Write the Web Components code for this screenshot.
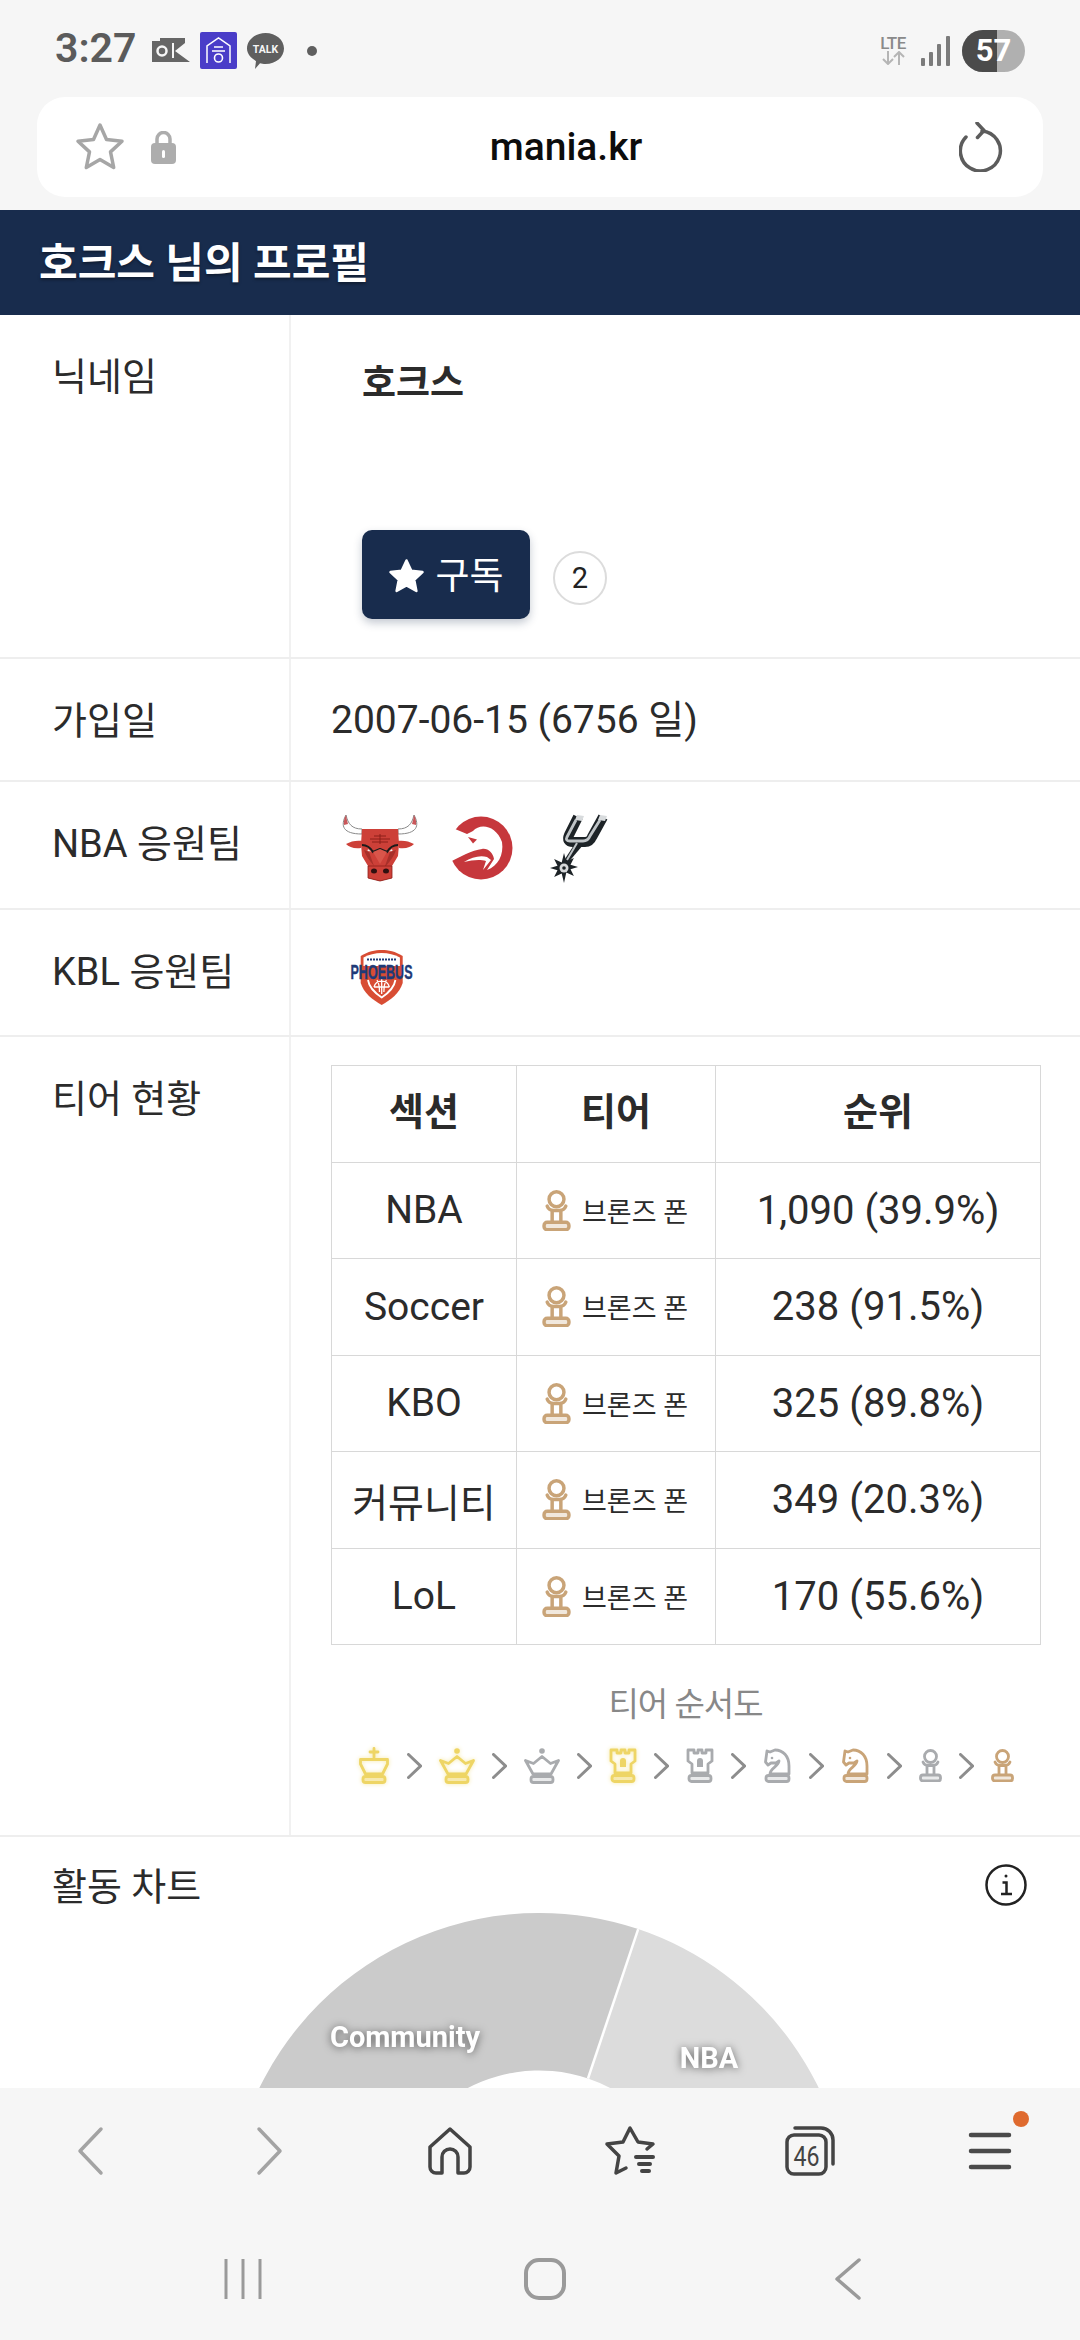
<!DOCTYPE html>
<html lang="ko">
<head>
<meta charset="utf-8">
<title>mania.kr</title>
<style>
  html, body { margin: 0; padding: 0; }
  body {
    width: 1080px; height: 2340px; overflow: hidden;
    display: flex; flex-direction: column;
    background: #fff; color: #2b2b2b;
    font-family: Roboto, "Noto Sans CJK KR", sans-serif;
  }
  main { flex: 1; min-height: 0; overflow: hidden; }
</style>
</head>
<body>
<status-bar></status-bar>
<address-bar host="mania.kr"></address-bar>
<main>
  <profile-title>호크스 님의 프로필</profile-title>
  <profile-row label="닉네임" style="height:344px">
    <div style="padding-left:31px;font-weight:700;font-size:37px;line-height:42px;padding-top:48px">호크스</div>
    <div style="padding:125px 0 0 31px"><subscribe-button count="2"></subscribe-button></div>
  </profile-row>
  <profile-row label="가입일" style="height:123px"><div style="font-size:39px;line-height:44px;padding-top:39px">2007-06-15 (6756 일)</div></profile-row>
  <profile-row label="NBA 응원팀" style="height:128px"><team-logos teams="bulls hawks spurs"></team-logos></profile-row>
  <profile-row label="KBL 응원팀" style="height:127px"><team-logos teams="phoebus"></team-logos></profile-row>
  <profile-row label="티어 현황" style="height:800px">
    <div style="padding-top:28px"><tier-table></tier-table><tier-order></tier-order></div>
  </profile-row>
  <activity-chart></activity-chart>
</main>
<browser-nav></browser-nav>
<system-nav></system-nav>

<script>
/* pieces are drawn at their real size, the base is added by TierIcon */
const PIECES = {
  king: {w: 32, h: 37, base: [5, 29.5, 22], d: '<path d="M16 1.500v9M12 5h8"/><path d="M2.500 12.500h27v4.500l-5 10H7.500l-5-10z"/>'},
  queen: {w: 36, h: 37, base: [7, 29.5, 22], d: '<circle cx="18" cy="4" r="2.800" fill="currentColor" stroke="none"/><path d="M1.500 13.500l8 3 8.500-7 8.500 7 8-3-7.500 13.500H9z"/>'},
  rook: {w: 28, h: 35, base: [3, 27.500, 22], d: '<path d="M2 2h6v3h4V2h4v3h4V2h6v11l-4 3v9H6v-9l-4-3z"/><path d="M14 10a3 3 0 0 1 3 3v6h-6v-6a3 3 0 0 1 3-3z" fill="currentColor" stroke="none"/>'},
  knight: {w: 29, h: 35, base: [3, 27.500, 23], d: '<path d="M2.500 14L4 3l3 1 5-2c8 0 14 6 14 16v8H7c0-6 8-7 9-13l-3 2-5 0-3 2z"/><circle cx="9" cy="10" r="1.300" fill="currentColor" stroke="none"/>'},
  pawn: {w: 23, h: 33, base: [1.500, 26, 20], d: '<circle cx="11.500" cy="7.500" r="6"/><path d="M4 13c1 2.500 3 3.500 5 3.500h5c2 0 4-1 5-3.500M8 16.500V25M15 16.500V25"/>'}
};
const TIER_COLORS = {gold: '#eed565', silver: '#a9abae', bronze: '#c9a478'};

class TierIcon extends HTMLElement {
  connectedCallback() {
    const piece = PIECES[this.getAttribute('piece')];
    const tier = this.getAttribute('tier');
    const w = this.getAttribute('w') || piece.w;
    const h = this.getAttribute('h') || piece.h;
    const glow = tier === 'gold' ? 'filter:drop-shadow(0 0 2px #f6e9a8);' : '';
    const [bx, by, bw] = piece.base;
    this.attachShadow({mode: 'open'}).innerHTML = `
      <style>:host{display:inline-flex;color:${TIER_COLORS[tier]}}svg{display:block;${glow}}</style>
      <svg width="${w}" height="${h}" viewBox="0 0 ${piece.w} ${piece.h}" fill="none" stroke="currentColor" stroke-width="2.800" stroke-linejoin="round" stroke-linecap="round">
        ${piece.d}
        <rect x="${bx}" y="${by}" width="${bw}" height="6" rx="2.500" fill="currentColor" fill-opacity=".25"/>
      </svg>`;
  }
}
customElements.define('tier-icon', TierIcon);

class StatusBar extends HTMLElement {
  constructor() {
    super();
    this.attachShadow({mode: 'open'}).innerHTML = `
      <style>
        :host { display:flex; align-items:center; height:97px; background:#f6f6f6; padding:0 55px 0 55px; box-sizing:border-box; position:relative; }
        .time { font:600 41px/1 Roboto,sans-serif; color:#5b5b5b; width:97px; margin-top:-1px; }
        .left { display:flex; align-items:center; gap:10px; margin-top:4px; }
        .dot { width:10px; height:10px; border-radius:50%; background:#5f5f5f; margin-left:13px; }
        .right { margin-left:auto; display:flex; align-items:center; gap:12px; margin-top:4px; }
        .lte { display:flex; flex-direction:column; align-items:center; font:500 17px/15px Roboto,sans-serif; color:#8a8a8a; width:32px; letter-spacing:-.5px; }
        .bat { position:relative; width:63px; height:42px; border-radius:21px; overflow:hidden; background:#b0b0b0; display:flex; align-items:center; justify-content:center; color:#fff; font:700 31px/1 Roboto,sans-serif; }
        .bat::before { content:""; position:absolute; left:0; top:0; bottom:0; width:35px; background:#4b4b4b; }
        .bat span { position:relative; }
      </style>
      <span class="time">3:27</span>
      <div class="left">
        <svg width="38" height="26" viewBox="0 0 38 26">
          <path d="M0 3h8V0h25v5L23 13l15 11H0z" fill="#666"/>
          <circle cx="10" cy="13" r="4.500" fill="none" stroke="#f6f6f6" stroke-width="2.500"/>
          <path d="M21 5v15" fill="none" stroke="#f6f6f6" stroke-width="2"/>
        </svg>
        <svg width="37" height="37" viewBox="0 0 37 37">
          <rect width="37" height="37" rx="2" fill="#4a3dc8"/>
          <path d="M7 31V14L18.500 6 30 14v17" fill="none" stroke="#fff" stroke-width="1.500"/>
          <path d="M14 15h9M12 19h13" stroke="#fff" stroke-width="1.600"/>
          <circle cx="18.500" cy="26" r="4" fill="none" stroke="#fff" stroke-width="1.600"/>
        </svg>
        <svg width="37" height="36" viewBox="0 0 37 36">
          <path d="M18.500 0C29 0 37 7 37 15.500S29 31 18.500 31c-2 0-4-.2-5.500-.7L8 36l1-8C4 25 0 21 0 15.500 0 7 8 0 18.500 0z" fill="#5f5f5f"/>
          <text x="18.500" y="19.500" text-anchor="middle" fill="#f6f6f6" font-family="Roboto,sans-serif" font-weight="700" font-size="10.500">TALK</text>
        </svg>
        <span class="dot"></span>
      </div>
      <div class="right">
        <div class="lte">LTE
          <svg width="26" height="14" viewBox="0 0 26 14" fill="none" stroke="#b5b5b5" stroke-width="2"><path d="M8 0v13M3 8l5 5 5-5M19 14V1M14 6l5-5 5 5"/></svg>
        </div>
        <svg width="29" height="30" viewBox="0 0 29 30" fill="#7b7b7b"><rect x="0" y="22" width="4" height="8" rx="1"/><rect x="8" y="16" width="4" height="14" rx="1"/><rect x="16" y="8" width="4" height="22" rx="1"/><rect x="25" y="0" width="4" height="30" rx="1"/></svg>
        <div class="bat"><span>57</span></div>
      </div>`;
  }
}
customElements.define('status-bar', StatusBar);

class AddressBar extends HTMLElement {
  connectedCallback() {
    this.attachShadow({mode: 'open'}).innerHTML = `
      <style>
        :host { display:block; background:#f6f6f6; padding:0 37px 13px; }
        .bar { height:100px; background:#fff; border-radius:28px; display:flex; align-items:center; padding:0 39px 0 38px; position:relative; }
        .host { position:absolute; left:0; right:0; text-align:center; font:500 39px/1 Roboto,"Noto Sans CJK KR",sans-serif; color:#0c0c0c; padding-left:52px; box-sizing:border-box; }
        .star { margin-right:26px; position:relative; }
        .lock { position:relative; }
        .reload { margin-left:auto; position:relative; }
      </style>
      <div class="bar">
        <span class="host">${this.getAttribute('host')}</span>
        <svg class="star" width="50" height="50" viewBox="0 0 50 50"><path d="M25 3l6.500 14.500 15.500 1.800-11.500 10.600 3.200 15.600L25 37.500l-13.700 8 3.200-15.600L3 19.300l15.500-1.800z" fill="none" stroke="#a6a6a6" stroke-width="3.500" stroke-linejoin="round"/></svg>
        <svg class="lock" width="25" height="33" viewBox="0 0 25 33"><path d="M6 14V8a6.500 6.500 0 0 1 13 0v6" fill="none" stroke="#adadad" stroke-width="3.500"/><rect y="12" width="25" height="21" rx="4" fill="#adadad"/><rect x="11" y="19" width="3" height="8" rx="1.500" fill="#fff"/></svg>
        <svg class="reload" width="45" height="50" viewBox="0 0 45 50" fill="none" stroke="#5c5c5c" stroke-width="3.500" stroke-linecap="round" stroke-linejoin="round"><path d="M23 9A20 20 0 1 1 7 15"/><path d="M18 1l7 7.500-6.500 7"/></svg>
      </div>`;
  }
}
customElements.define('address-bar', AddressBar);

class ProfileTitle extends HTMLElement {
  constructor() {
    super();
    this.attachShadow({mode: 'open'}).innerHTML = `
      <style>
        :host { display:flex; align-items:center; height:105px; background:#182c4d; color:#fff; padding:0 0 6px 39px; box-sizing:border-box; font-size:42px; font-weight:700; text-shadow:0 2px 3px rgba(0,0,0,.35); }
      </style>
      <slot></slot>`;
  }
}
customElements.define('profile-title', ProfileTitle);

class ProfileRow extends HTMLElement {
  connectedCallback() {
    this.attachShadow({mode: 'open'}).innerHTML = `
      <style>
        :host { display:grid; grid-template-columns:290px 1fr; box-sizing:border-box; border-bottom:2px solid #eeeeee; }
        .label { padding:40px 0 0 52px; font-size:38px; line-height:44px; border-right:2px solid #f1f1f1; box-sizing:border-box; width:291px; }
        .value { padding:0 40px 0 41px; min-width:0; }
      </style>
      <div class="label">${this.getAttribute('label')}</div>
      <div class="value"><slot></slot></div>`;
  }
}
customElements.define('profile-row', ProfileRow);

class SubscribeButton extends HTMLElement {
  connectedCallback() {
    this.attachShadow({mode: 'open'}).innerHTML = `
      <style>
        :host { display:flex; align-items:center; gap:23px; }
        .btn { width:168px; height:89px; background:#182c4d; border-radius:10px; color:#fff; font-size:37px; display:flex; align-items:center; justify-content:center; gap:10px; box-shadow:0 4px 8px rgba(24,44,77,.25); padding-bottom:3px; box-sizing:border-box; }
        .count { width:54px; height:54px; margin-top:6px; box-sizing:border-box; border:2px solid #dcdcdc; border-radius:50%; display:flex; align-items:center; justify-content:center; font-size:29px; color:#222; }
      </style>
      <div class="btn"><svg width="37" height="36" viewBox="0 0 37 36" style="margin-top:5px"><path d="M18.500 2.500l4.800 10.300 11.200 1.300-8.300 7.700 2.200 11.200-9.900-5.600-9.900 5.600 2.200-11.200L2.500 14.100l11.200-1.300z" fill="#fff" stroke="#fff" stroke-width="2.500" stroke-linejoin="round"/></svg><span>구독</span></div>
      <div class="count">${this.getAttribute('count')}</div>`;
  }
}
customElements.define('subscribe-button', SubscribeButton);

const LOGOS = {
  bulls: `<svg width="77" height="68" viewBox="0 0 77 68" style="overflow:visible">
    <path d="M3 1C-3 12 0 20 19 20l0-5C9 15 5 10 3 1zM71 1c6 11 3 19-16 19v-5c10 0 14-5 16-14z" fill="#fff" stroke="#8a8a8a" stroke-width="1"/>
    <path d="M3 1C1 5 .5 8 1 11l4-1C4 7 3.500 4 3 1zM71 1c2 4 2.500 7 2 10l-4-1c1-3 1.500-6 2-9z" fill="#c9575a"/>
    <path d="M3 30c5-3 11-4 17-3l-2 7c-7 1-12-1-15-4zM71 30c-5-3-11-4-17-3l2 7c7 1 12-1 15-4z" fill="#cd4038"/>
    <path d="M19 15h36l1 15-1 12-6 10v12l-12 3-12-3V52l-6-10-1-12z" fill="#cd4038"/>
    <path d="M19 31c5 0 8 2 11 7l7-3 7 3c3-5 6-7 11-7" fill="none" stroke="#1b1b1b" stroke-width="2.200" stroke-linejoin="round"/>
    <path d="M21 36c2 6 5 10 10 16h12c5-6 8-10 10-16l-6 2-5 14H31l-5-14z" fill="#a8302a"/>
    <path d="M30 38l7 12 7-12-7-3z" fill="#d9554a"/>
    <path d="M27 25h20M29 28h16M31 22h12M37 20v10" fill="none" stroke="#8d1f19" stroke-width="1"/>
    <path d="M25 35l3 2.500-3.500-.5zM49 35l-3 2.500 3.500-.5z" fill="#f1f1f1"/>
    <path d="M25 52h24v12l-12 3-12-3z" fill="#cd4038" stroke="#8d1f19" stroke-width=".8"/>
    <ellipse cx="31" cy="57" rx="3" ry="2.500" fill="#301010"/><ellipse cx="43" cy="57" rx="3" ry="2.500" fill="#301010"/>
  </svg>`,
  hawks: `<svg width="64" height="66" viewBox="0 0 64 66" style="margin-right:8px;overflow:visible">
    <circle cx="31" cy="33" r="31.500" fill="#c6373c"/>
    <path d="M-2 15L5 14l12 5 6-3C30 8 46 10 52 27c2 13-4 24-15 28l7-11c-1-6-6-11-12-10C22 35 10 42 0 47l-3 0z" fill="#fff"/>
    <path d="M14 47c8-5 16-7 23-5l4 3-8 10 3-9c-6-2-14-1-22 1z" fill="#fff"/>
    <path d="M18 22l9 2.500-4 4z" fill="#c6373c"/>
  </svg>`,
  spurs: `<svg width="56" height="70" viewBox="0 0 56 70" style="overflow:visible">
    <path d="M26 4L17 22Q14 29 21 29H33Q38 29 40 24L51 4" fill="none" stroke="#1d2327" stroke-width="10" stroke-linejoin="round"/>
    <path d="M22 32h9L15 51l-4-2z" fill="#1d2327"/>
    <path d="M24 7L15 24Q13 28 18 28H31Q36 28 38 23L48 7" fill="none" stroke="#bfc4c7" stroke-width="2.800"/>
    <path d="M25 30L15 47" fill="none" stroke="#bfc4c7" stroke-width="2"/>
    <path d="M25 2l7 1-2 5-7-1zM48 2l7 1-2 5-7-1z" fill="#d8dbdd"/>
    <path d="M12 40l2.300 8.500 7.600-3.500-3.400 6.700 7.500 2.300-7.500 2.300 3.400 6.700-7.600-3.500L12 70l-2.300-9.500-7.600 3.500 3.400-6.700L-2 55l7.500-2.300L2.100 46l7.600 3.500z" fill="#1d2327"/>
    <circle cx="12" cy="55" r="4.500" fill="#d6d8da"/><circle cx="12" cy="55" r="1.800" fill="#1d2327"/>
  </svg>`,
  phoebus: `<svg width="64" height="58" viewBox="0 0 64 58" style="overflow:visible">
    <path d="M10.700 8C18 3.500 25 2 31.700 2s13.700 1.500 21 6v27c-3 10-12 17-21 22-9-5-18-12-21-22z" fill="#d84d34"/>
    <path d="M13.500 9.500C19 6.500 25 5 31.700 5s12.700 1.500 18.200 4.500V18h-36.400z" fill="#fff"/>
    <path d="M17 11.500h30" stroke="#1e3a78" stroke-width="2" stroke-dasharray="2 1"/>
    <path d="M18 32c1 7 7 13 13.700 17.500C38.400 45 44.400 39 45.400 32" fill="none" stroke="#fff" stroke-width="1.800"/>
    <path d="M24 39a8 8 0 0 1 15.400 0M31.700 31v15M27 32c2 3 2.500 7 2.500 12M36.400 32c-2 3-2.500 7-2.500 12M24 39h15.400" fill="none" stroke="#fff" stroke-width="1.300"/>
    <text x="31.500" y="30.500" text-anchor="middle" font-family="'Liberation Sans',sans-serif" font-weight="700" font-size="20" textLength="62" lengthAdjust="spacingAndGlyphs" fill="#1e3a78" stroke="#1e3a78" stroke-width=".4">PHOEBUS</text>
  </svg>`
};

class TeamLogos extends HTMLElement {
  connectedCallback() {
    const teams = this.getAttribute('teams').split(' ');
    const first = teams[0] === 'phoebus' ? '38px' : '31px';
    const left = teams[0] === 'phoebus' ? '19px' : '12px';
    this.attachShadow({mode: 'open'}).innerHTML = `
      <style>
        :host { display:block; padding:${first} 0 0 ${left}; }
        .row { display:flex; align-items:center; gap:30px; }
        svg { display:block; flex:none; }
      </style>
      <div class="row">${teams.map((t) => LOGOS[t]).join('')}</div>`;
  }
}
customElements.define('team-logos', TeamLogos);

class TierTable extends HTMLElement {
  constructor() {
    super();
    const rows = [
      ['NBA', '1,090 (39.9%)'],
      ['Soccer', '238 (91.5%)'],
      ['KBO', '325 (89.8%)'],
      ['커뮤니티', '349 (20.3%)'],
      ['LoL', '170 (55.6%)']
    ];
    this.attachShadow({mode: 'open'}).innerHTML = `
      <style>
        :host { display:block; }
        table { border-collapse:collapse; width:709px; table-layout:fixed; font-size:40px; color:#2b2b2b; }
        th, td { border:1px solid #d8d8d8; text-align:center; padding:0; height:96.500px; box-sizing:border-box; }
        th { font-weight:700; font-size:38px; padding-bottom:10px; }
        td.name { font-size:39px; }
        .tier { display:flex; align-items:center; gap:11px; padding-left:25px; font-size:27px; white-space:nowrap; }
      </style>
      <table>
        <colgroup><col style="width:185px"><col style="width:199px"><col style="width:325px"></colgroup>
        <thead><tr><th>섹션</th><th>티어</th><th>순위</th></tr></thead>
        <tbody>${rows.map((r) => `<tr><td class="name">${r[0]}</td><td><div class="tier"><tier-icon piece="pawn" tier="bronze" w="29" h="41"></tier-icon><span>브론즈 폰</span></div></td><td>${r[1]}</td></tr>`).join('')}</tbody>
      </table>`;
  }
}
customElements.define('tier-table', TierTable);

class TierOrder extends HTMLElement {
  constructor() {
    super();
    const order = [
      ['king', 'gold'], ['queen', 'gold'], ['queen', 'silver'],
      ['rook', 'gold'], ['rook', 'silver'], ['knight', 'silver'],
      ['knight', 'bronze'], ['pawn', 'silver'], ['pawn', 'bronze']
    ];
    const chevron = '<svg width="15" height="26" viewBox="0 0 15 26" fill="none" stroke="#8d8d8d" stroke-width="3" stroke-linecap="round"><path d="M1.500 1.500l12 11.500-12 11.500"/></svg>';
    this.attachShadow({mode: 'open'}).innerHTML = `
      <style>
        :host { display:block; text-align:center; padding-top:40px; }
        h4 { margin:0; font-weight:400; font-size:33px; line-height:40px; color:#888; letter-spacing:-1px; }
        .row { display:flex; align-items:center; justify-content:center; gap:17px; margin-top:22px; }
      </style>
      <h4>티어 순서도</h4>
      <div class="row">${order.map((o) => `<tier-icon piece="${o[0]}" tier="${o[1]}"></tier-icon>`).join(chevron)}</div>`;
  }
}
customElements.define('tier-order', TierOrder);

class ActivityChart extends HTMLElement {
  constructor() {
    super();
    // circle centre 539,344 inside the svg: r 311 outer, 153 hole, split at 18.6deg
    this.attachShadow({mode: 'open'}).innerHTML = `
      <style>
        :host { display:block; }
        .head { display:flex; justify-content:space-between; align-items:center; padding:25px 53px 0 52px; height:46px; font-size:38px; }
        .head span { margin-top:-4px; }
        svg.chart { display:block; margin-top:-28px; }
        text { font-family:Roboto,sans-serif; font-weight:700; font-size:29px; fill:#fff; filter:drop-shadow(0 1px 4px rgba(0,0,0,.55)); }
      </style>
      <div class="head"><span>활동 차트</span>
        <svg width="42" height="42" viewBox="0 0 42 42" fill="none" stroke="#222" stroke-width="2.500"><circle cx="21" cy="21" r="19.500"/><path d="M17.500 18.500h4v11M16 30h11"/><circle cx="21" cy="12" r="1.500" fill="#222" stroke="none"/></svg>
      </div>
      <svg class="chart" width="1080" height="600" viewBox="0 0 1080 600">
        <path d="M638.200 49.100L588 198.500A153 153 0 0 1 692 344h158A311 311 0 0 0 638.200 49.100z" fill="#dcdcdc"/>
        <path d="M539 33A311 311 0 0 0 228 344h158A153 153 0 0 1 588 198.500L638.200 49.100A311 311 0 0 0 539 33z" fill="#cbcbcb"/>
        <path d="M638.200 49.100L588 198.500" stroke="#fff" stroke-width="2.500"/>
        <text x="405" y="167" text-anchor="middle">Community</text>
        <text x="709" y="188" text-anchor="middle">NBA</text>
      </svg>`;
  }
}
customElements.define('activity-chart', ActivityChart);

class BrowserNav extends HTMLElement {
  constructor() {
    super();
    this.attachShadow({mode: 'open'}).innerHTML = `
      <style>
        :host { display:grid; grid-template-columns:repeat(6, 180px); height:148px; background:#f6f6f6; }
        div { display:flex; align-items:center; justify-content:center; position:relative; padding-bottom:22px; }
        svg { overflow:visible; display:block; }
        .dot { position:absolute; left:113px; top:23px; width:16px; height:16px; border-radius:50%; background:#df6a2e; }
        text { font-family:Roboto,sans-serif; font-size:27px; fill:#444; stroke:none; }
      </style>
      <div><svg width="26" height="48" viewBox="0 0 26 48" fill="none" stroke="#a3a3a3" stroke-width="3.500" stroke-linecap="round" stroke-linejoin="round"><path d="M24 2L3 24l21 22"/></svg></div>
      <div><svg width="26" height="48" viewBox="0 0 26 48" fill="none" stroke="#a3a3a3" stroke-width="3.500" stroke-linecap="round" stroke-linejoin="round"><path d="M2 2l21 22L2 46"/></svg></div>
      <div><svg width="44" height="48" viewBox="0 0 44 48" fill="none" stroke="#444" stroke-width="3.500" stroke-linejoin="round" stroke-linecap="round"><path d="M22 2L2 20v20a6 6 0 0 0 6 6h6V30a8 8 0 0 1 16 0v16h6a6 6 0 0 0 6-6V20z"/></svg></div>
      <div><svg width="50" height="48" viewBox="0 0 50 48" fill="none" stroke="#444" stroke-width="3.500" stroke-linejoin="round" stroke-linecap="round"><path d="M42 22l6-5-15-2L25 1l-7 14-16 2 12 12-3 17 10-5"/><path d="M31 30h17M34 37h11M37 44h7" stroke-width="4"/></svg></div>
      <div><svg width="50" height="50" viewBox="0 0 50 50" fill="none" stroke="#444" stroke-width="3.500" stroke-linejoin="round" stroke-linecap="round"><rect x="2" y="9" width="39" height="39" rx="7"/><path d="M10 2h26a12 12 0 0 1 12 12v24"/><text x="21.500" y="40" text-anchor="middle" textLength="26" lengthAdjust="spacingAndGlyphs">46</text></svg></div>
      <div><svg width="42" height="38" viewBox="0 0 42 38" fill="none" stroke="#4a4a4a" stroke-width="4.500" stroke-linecap="round"><path d="M2 3h38M2 19h38M2 35h38"/></svg><span class="dot"></span></div>`;
  }
}
customElements.define('browser-nav', BrowserNav);

class SystemNav extends HTMLElement {
  constructor() {
    super();
    this.attachShadow({mode: 'open'}).innerHTML = `
      <style>
        :host { display:grid; grid-template-columns:repeat(3, 302px); justify-content:center; height:104px; background:#f6f6f6; padding-left:10px; box-sizing:border-box; }
        div { display:flex; align-items:center; justify-content:center; padding-bottom:19px; }
        svg { display:block; }
      </style>
      <div><svg width="38" height="40" viewBox="0 0 38 40" stroke="#9a9a9a" stroke-width="3"><path d="M2 0v40M19 0v40M36 0v40"/></svg></div>
      <div><svg width="42" height="42" viewBox="0 0 42 42" fill="none" stroke="#9a9a9a" stroke-width="4"><rect x="2" y="2" width="38" height="38" rx="13"/></svg></div>
      <div><svg width="27" height="42" viewBox="0 0 27 42" fill="none" stroke="#9a9a9a" stroke-width="3.500" stroke-linecap="round" stroke-linejoin="round"><path d="M25 2L3 21l22 19"/></svg></div>`;
  }
}
customElements.define('system-nav', SystemNav);
</script>
</body>
</html>
